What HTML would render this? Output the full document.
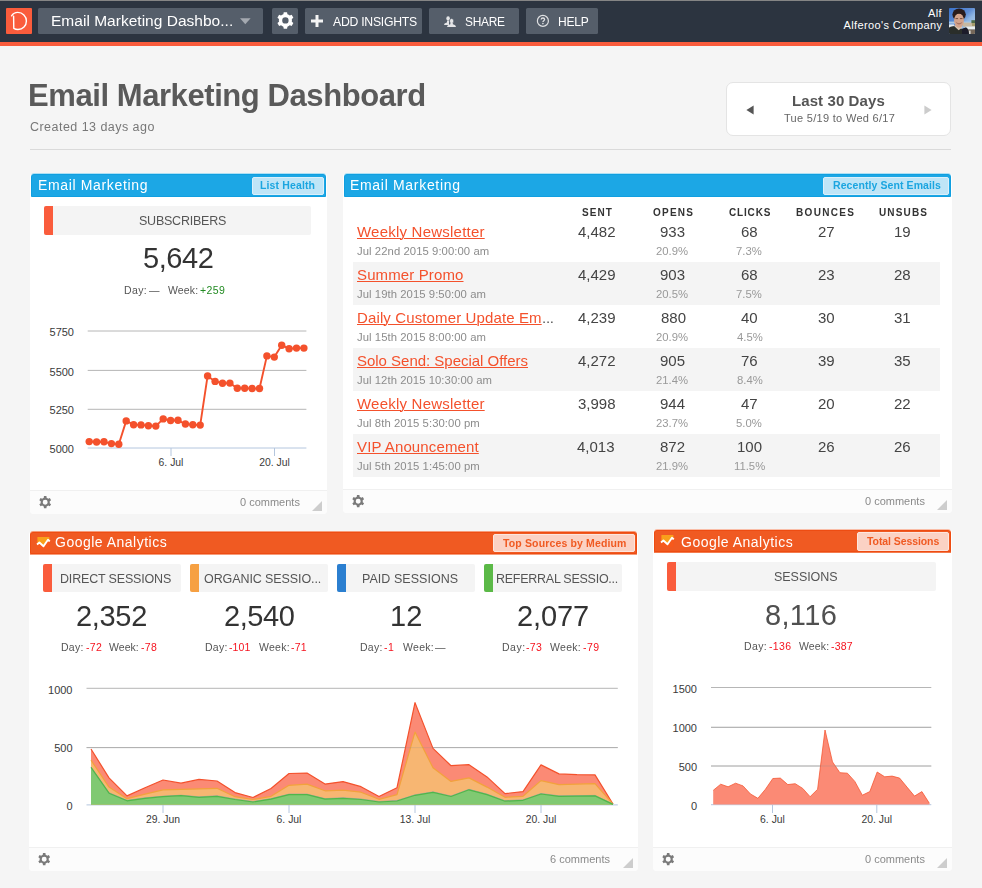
<!DOCTYPE html>
<html lang="en">
<head>
<meta charset="utf-8">
<title>Email Marketing Dashboard</title>
<style>
*{box-sizing:border-box;margin:0;padding:0}
html,body{width:982px;height:888px;overflow:hidden}
body{background:#f5f5f5;font-family:"Liberation Sans",sans-serif;color:#444;position:relative}
.t{position:absolute;white-space:pre;display:block;will-change:transform}
.t.nog{will-change:auto}
.lk{text-decoration:underline;text-decoration-thickness:1px;text-underline-offset:1px}
svg{position:absolute;display:block;overflow:visible}
svg text{font-family:"Liberation Sans",sans-serif}
#top{position:absolute;left:0;top:0;width:982px;height:46px;background:#2c3440;border-top:1px solid #858585;border-bottom:4px solid #fa5c3c}
#top .in{position:absolute;left:0;top:-1px;width:982px;height:46px}
.tb{position:absolute;top:8px;height:26px;background:#555e6a;border-radius:1.5px}
#logo{left:6px;top:8px}
#avatar{left:949px;top:8px}
#hr{position:absolute;left:30px;top:149px;width:921px;height:1px;background:#dadada}
#range{position:absolute;left:726px;top:82px;width:225px;height:54px;background:#fff;border:1px solid #e4e4e4;border-radius:7px}
.w{position:absolute;background:#fff;border-radius:4px}
.wh{position:absolute;left:1px;right:1px;border-radius:3px 3px 0 0;border:1px solid}
.blue .wh{background:#1ca7e5;border-color:#109fe0}
.orange .wh{background:#f05a22;border-color:#ee4c12}
.badge{position:absolute;border-radius:2px;border:1px solid}
.blue .badge{background:#bfe5f7;border-color:#dbf0fb}
.orange .badge{background:#fbd2c4;border-color:#fde6de}
.wf{position:absolute;left:0;right:0;bottom:0;height:24px;background:#fcfcfc;border-top:1px solid #f0f0f0;border-radius:0 0 4px 4px}
.wf .tri{position:absolute;right:5px;bottom:3.5px;width:0;height:0;border-style:solid;border-width:0 0 10px 10px;border-color:transparent transparent #cdcdcd transparent}
.ml{position:absolute;background:#f4f4f4;border-radius:2px}
.ml i{position:absolute;left:0;top:0;bottom:0;width:9px;border-radius:2px 0 0 2px}
.row{position:absolute;background:#f4f4f4}
</style>
</head>
<body>
<div id="top"><div class="in"><svg id="logo" width="26" height="26" viewBox="6 8 26 26"><rect x="6" y="8" width="26" height="26" rx="1" fill="#fa5c3c"/><path d="M11.6 15.8C13 13.6 15.4 12.4 17.8 12.4C22.6 12.4 26.4 16.2 26.4 21C26.4 25.8 22.8 29.5 18 29.5C16.4 29.5 14.9 29.1 13.8 28.4L13.6 16.2" fill="none" stroke="#fff" stroke-width="1.4" stroke-linecap="round" stroke-linejoin="round"/></svg><div class="tb" style="left:38px;width:225px"></div><div class="tb" style="left:272px;width:26px"></div><div class="tb" style="left:305px;width:117px"></div><div class="tb" style="left:429px;width:90px"></div><div class="tb" style="left:526px;width:72px"></div><svg class="ic" style="left:239.5px;top:18px" width="11" height="7" viewBox="0 0 11 7"><path d="M0 .3H10.6L5.3 6.3Z" fill="#a4a9b0"/></svg><svg class="ic" style="left:276.8px;top:12.0px" width="16.8" height="16.8" viewBox="0 0 16.8 16.8"><path fill="#fff" fill-rule="evenodd" d="M6.38 2.17L6.73 0.17L10.07 0.17L10.42 2.17A6.55 6.55 0 0 1 12.78 3.53L14.69 2.83L16.37 5.73L14.81 7.04A6.55 6.55 0 0 1 14.81 9.76L16.37 11.07L14.69 13.97L12.78 13.27A6.55 6.55 0 0 1 10.42 14.63L10.07 16.63L6.73 16.63L6.38 14.63A6.55 6.55 0 0 1 4.02 13.27L2.11 13.97L0.43 11.07L1.99 9.76A6.55 6.55 0 0 1 1.99 7.04L0.43 5.73L2.11 2.83L4.02 3.53A6.55 6.55 0 0 1 6.38 2.17ZM11.59 8.40A3.19 3.19 0 1 0 5.21 8.40A3.19 3.19 0 1 0 11.59 8.40Z"/></svg><svg class="ic" style="left:311px;top:15px" width="12" height="12" viewBox="0 0 12 12"><path d="M4.5 0h3v4.5H12v3H7.5V12h-3V7.5H0v-3h4.5z" fill="#f4f4f4"/></svg><svg class="ic" style="left:444px;top:16px" width="12" height="11" viewBox="444 16 12 11"><g fill="#e4e5e7"><ellipse cx="448.1" cy="18.4" rx="1.8" ry="2.1"/><path d="M444.1 25C444.2 23.6 445.3 23.1 446.9 22.6L447.2 20.6H449V25Z"/><ellipse cx="451.6" cy="21" rx="2.1" ry="2.5" stroke="#555e6a" stroke-width=".5"/><path d="M447.1 26.9C447.1 25.4 448.4 24.9 450.3 24.3L450.5 23H452.7L452.9 24.3C454.8 24.9 455.9 25.4 455.9 26.9Z"/></g></svg><svg class="ic" style="left:536px;top:14px" width="14" height="14" viewBox="536 14 14 14"><circle cx="542.9" cy="20.9" r="5.5" fill="none" stroke="#e0e1e3" stroke-width="1.2"/><path d="M541.2 19.6C541.2 18.6 541.9 18 542.9 18S544.6 18.6 544.6 19.5C544.6 20.6 542.9 20.8 542.9 22" fill="none" stroke="#e0e1e3" stroke-width="1.3"/><circle cx="542.9" cy="23.6" r=".8" fill="#e0e1e3"/></svg><svg id="avatar" width="26" height="26" viewBox="0 0 26 26"><defs><linearGradient id="sky" x1="0" y1="0" x2="0.9" y2="1"><stop offset="0" stop-color="#3a72cb"/><stop offset=".45" stop-color="#5f8dd3"/><stop offset=".62" stop-color="#8fb6e2"/><stop offset="1" stop-color="#b9d3ea"/></linearGradient><filter id="bl" x="-20%" y="-20%" width="140%" height="140%"><feGaussianBlur stdDeviation="0.7"/></filter><clipPath id="avc"><rect width="26" height="26" rx="1"/></clipPath></defs><g clip-path="url(#avc)"><rect width="26" height="26" fill="url(#sky)"/><g filter="url(#bl)"><rect x="-3" y="13.6" width="32" height="2" fill="#a9c8e4"/><rect x="14" y="14.6" width="15" height="4.2" fill="#c7b9a2"/><rect x="22.4" y="12.2" width="6" height="3" fill="#4d6a49"/><rect x="23" y="15" width="5" height="3" fill="#a59c6c"/><rect x="16.5" y="18.6" width="12" height="3" fill="#e9eff1"/><rect x="-3" y="16.4" width="8" height="3.6" fill="#e4eaee"/><rect x="19" y="21.4" width="9" height="7" fill="#75685a"/><rect x="19.6" y="22.6" width="2" height="5" fill="#d8d8d4"/><path d="M-2 28V21C0 19 3 18 6 18L13 21L17 19.4C19 20.5 19.8 23 20 28Z" fill="#2b2d29"/><path d="M13 21L17 19.4C19 20.5 19.8 23 20 28H13Z" fill="#1c1e29"/><path d="M4.6 17.6L9.6 22.2L13.4 19.6L12 17Z" fill="#d9c6b4"/><ellipse cx="10.1" cy="6.6" rx="6.7" ry="6.2" fill="#2a1d1b"/><ellipse cx="10" cy="12.6" rx="4.9" ry="7.2" fill="#d3a38b"/><path d="M4.9 9C5.6 6.4 7.6 5.4 10 5.4C12.6 5.4 14.6 6.4 15.2 9.4C15.6 6 14.2 2.6 10 2.6C6 2.6 4.4 6 4.9 9Z" fill="#2a1d1b"/><rect x="6.5" y="10" width="2.6" height="1.1" fill="#7d5444"/><rect x="10.9" y="10" width="2.6" height="1.1" fill="#7d5444"/><path d="M6.6 13.4C7.4 15.6 8.6 16.4 10 16.4C11.4 16.4 12.8 15.6 13.6 13.4C12.6 14.6 11.4 15 10 15C8.6 15 7.6 14.6 6.6 13.4Z" fill="#a87463"/></g></g></svg><span class="t g" style="left:50.50px;top:11px;font-size:15.5px;line-height:19px;letter-spacing:0.018px;color:#fff">Email Marketing Dashbo...</span><span class="t nog" style="left:332.65px;top:15px;font-size:12.5px;line-height:15px;letter-spacing:-0.275px;color:#fff;transform:scaleX(0.9794);transform-origin:0 50%">ADD INSIGHTS</span><span class="t nog" style="left:464.78px;top:15px;font-size:12.5px;line-height:15px;letter-spacing:-0.275px;color:#fff;transform:scaleX(0.9531);transform-origin:0 50%">SHARE</span><span class="t nog" style="left:557.97px;top:15px;font-size:12.5px;line-height:15px;letter-spacing:-0.275px;color:#fff;transform:scaleX(0.9636);transform-origin:0 50%">HELP</span><span class="t nog" style="left:928.11px;top:6px;font-size:11px;line-height:14px;letter-spacing:0.350px;color:#fff">Alf</span><span class="t nog" style="left:843.59px;top:18px;font-size:11px;line-height:14px;letter-spacing:0.359px;color:#fff">Alferoo's Company</span></div></div>
<div id="range"></div><div id="hr"></div><svg class="ic" style="left:746px;top:105px" width="8" height="10" viewBox="0 0 8 10"><path d="M7.6 0.6V9.4L0.4 5Z" fill="#555"/></svg><svg class="ic" style="left:924px;top:104.5px" width="8" height="10" viewBox="0 0 8 10"><path d="M0.4 0.6V9.4L7.6 5Z" fill="#ccc"/></svg><span class="t" style="left:28.00px;top:77px;font-size:31px;line-height:38px;letter-spacing:-0.425px;color:#5a5a5a;font-weight:bold">Email Marketing Dashboard</span><span class="t" style="left:29.79px;top:120px;font-size:12.5px;line-height:15px;letter-spacing:0.463px;color:#777">Created 13 days ago</span><span class="t" style="left:792.10px;top:92px;font-size:15px;line-height:18px;letter-spacing:0.091px;color:#555;font-weight:bold">Last 30 Days</span><span class="t" style="left:783.62px;top:111px;font-size:11px;line-height:14px;letter-spacing:0.300px;color:#666">Tue 5/19 to Wed 6/17</span>
<div class="w blue" id="w1" style="left:30px;top:173px;width:297px;height:341px"><div class="wh" style="top:1px;height:23px;box-shadow:0 -1px 0 rgba(27,165,224,0.35),0 1px 0 rgba(27,165,224,0)"></div><div class="badge" style="left:222px;top:4px;width:72px;height:18px"></div><div class="ml" style="left:14px;top:33px;width:267px;height:29px"><i style="background:#fa5c3c"></i></div><svg class="chart" style="left:0;top:0" width="297" height="341" viewBox="30 173 297 341"><path d="M87.7 331H306.4" stroke="#b6b6b6" stroke-width="1" fill="none"/><path d="M87.7 370.4H306.4" stroke="#b6b6b6" stroke-width="1" fill="none"/><path d="M87.7 409.3H306.4" stroke="#b6b6b6" stroke-width="1" fill="none"/><path d="M87.7 448H306.4" stroke="#b4c6de" stroke-width="1" fill="none"/><path d="M171 448V456" stroke="#b4c6de" stroke-width="1" fill="none"/><path d="M274.5 448V456" stroke="#b4c6de" stroke-width="1" fill="none"/><path d="M89.2 441.6 L96.6 442.0 L104.0 441.8 L111.4 443.6 L118.8 444.3 L126.2 420.9 L133.6 424.7 L141.0 424.9 L148.4 425.8 L155.8 426.1 L163.2 418.9 L170.6 420.5 L178.0 420.3 L185.4 424.0 L192.8 424.7 L200.2 425.1 L207.6 375.9 L215.1 381.4 L222.5 383.2 L229.9 383.1 L237.3 388.3 L244.7 388.3 L252.1 388.5 L259.5 388.5 L266.9 355.9 L274.3 357.1 L281.7 345.2 L289.1 348.8 L296.5 348.1 L303.9 348.1" stroke="#f4512c" stroke-width="1.9" fill="none" stroke-linejoin="round"/><g fill="#f4512c"><circle cx="89.2" cy="441.6" r="3.7"/><circle cx="96.6" cy="442.0" r="3.7"/><circle cx="104.0" cy="441.8" r="3.7"/><circle cx="111.4" cy="443.6" r="3.7"/><circle cx="118.8" cy="444.3" r="3.7"/><circle cx="126.2" cy="420.9" r="3.7"/><circle cx="133.6" cy="424.7" r="3.7"/><circle cx="141.0" cy="424.9" r="3.7"/><circle cx="148.4" cy="425.8" r="3.7"/><circle cx="155.8" cy="426.1" r="3.7"/><circle cx="163.2" cy="418.9" r="3.7"/><circle cx="170.6" cy="420.5" r="3.7"/><circle cx="178.0" cy="420.3" r="3.7"/><circle cx="185.4" cy="424.0" r="3.7"/><circle cx="192.8" cy="424.7" r="3.7"/><circle cx="200.2" cy="425.1" r="3.7"/><circle cx="207.6" cy="375.9" r="3.7"/><circle cx="215.1" cy="381.4" r="3.7"/><circle cx="222.5" cy="383.2" r="3.7"/><circle cx="229.9" cy="383.1" r="3.7"/><circle cx="237.3" cy="388.3" r="3.7"/><circle cx="244.7" cy="388.3" r="3.7"/><circle cx="252.1" cy="388.5" r="3.7"/><circle cx="259.5" cy="388.5" r="3.7"/><circle cx="266.9" cy="355.9" r="3.7"/><circle cx="274.3" cy="357.1" r="3.7"/><circle cx="281.7" cy="345.2" r="3.7"/><circle cx="289.1" cy="348.8" r="3.7"/><circle cx="296.5" cy="348.1" r="3.7"/><circle cx="303.9" cy="348.1" r="3.7"/></g><g font-size="11" fill="#3a3a3a"><text x="74.0" y="336.1" text-anchor="end">5750</text><text x="74.0" y="375.6" text-anchor="end">5500</text><text x="74.0" y="414.1" text-anchor="end">5250</text><text x="74.0" y="453.1" text-anchor="end">5000</text><g font-size="10.4"><text x="171.0" y="465.6" text-anchor="middle">6. Jul</text><text x="274.5" y="465.6" text-anchor="middle">20. Jul</text></g></g></svg><div class="wf"><svg class="gear" style="left:8.9px;top:5.2px" width="12.4" height="12.4" viewBox="0 0 12.4 12.4"><path fill="#7a7a7a" fill-rule="evenodd" d="M4.78 1.84L4.96 0.12L7.44 0.12L7.62 1.84A4.59 4.59 0 0 1 9.27 2.79L10.84 2.09L12.08 4.23L10.69 5.25A4.59 4.59 0 0 1 10.69 7.15L12.08 8.17L10.84 10.31L9.27 9.61A4.59 4.59 0 0 1 7.62 10.56L7.44 12.28L4.96 12.28L4.78 10.56A4.59 4.59 0 0 1 3.13 9.61L1.56 10.31L0.32 8.17L1.71 7.15A4.59 4.59 0 0 1 1.71 5.25L0.32 4.23L1.56 2.09L3.13 2.79A4.59 4.59 0 0 1 4.78 1.84ZM8.68 6.20A2.48 2.48 0 1 0 3.72 6.20A2.48 2.48 0 1 0 8.68 6.20Z"/></svg><span class="tri"></span></div><span class="t" style="left:7.79px;top:4px;font-size:14px;line-height:17px;letter-spacing:0.649px;color:#fff">Email Marketing</span><span class="t" style="left:230.13px;top:6px;font-size:10.5px;line-height:13px;letter-spacing:0.134px;color:#1ba5e0;font-weight:bold">List Health</span><span class="t" style="left:108.64px;top:41px;font-size:12.5px;line-height:15px;letter-spacing:-0.229px;color:#555">SUBSCRIBERS</span><span class="t" style="left:112.61px;top:68px;font-size:29px;line-height:35px;letter-spacing:-0.451px;color:#333">5,642</span><span class="t" style="left:94.47px;top:111px;font-size:10.5px;line-height:13px;letter-spacing:0.368px;color:#555">Day:</span><span class="t" style="left:119.11px;top:111px;font-size:10.5px;line-height:13px;color:#555">—</span><span class="t" style="left:138.29px;top:111px;font-size:10.5px;line-height:13px;letter-spacing:0.129px;color:#555">Week:</span><span class="t" style="left:170.39px;top:111px;font-size:10.5px;line-height:13px;letter-spacing:0.389px;color:#228b22">+259</span><span class="t" style="left:209.71px;top:322px;font-size:11px;line-height:14px;color:#8a8a8a">0 comments</span></div>
<div class="w blue" id="w2" style="left:343px;top:173px;width:609px;height:340px"><div class="wh" style="top:1px;height:23px;box-shadow:0 -1px 0 rgba(27,165,224,0.35),0 1px 0 rgba(27,165,224,0)"></div><div class="badge" style="left:480px;top:4px;width:126px;height:18px"></div><div class="row" style="left:10px;top:89px;width:587px;height:43px"></div><div class="row" style="left:10px;top:175px;width:587px;height:43px"></div><div class="row" style="left:10px;top:261px;width:587px;height:43px"></div><div class="wf"><svg class="gear" style="left:8.9px;top:5.2px" width="12.4" height="12.4" viewBox="0 0 12.4 12.4"><path fill="#7a7a7a" fill-rule="evenodd" d="M4.78 1.84L4.96 0.12L7.44 0.12L7.62 1.84A4.59 4.59 0 0 1 9.27 2.79L10.84 2.09L12.08 4.23L10.69 5.25A4.59 4.59 0 0 1 10.69 7.15L12.08 8.17L10.84 10.31L9.27 9.61A4.59 4.59 0 0 1 7.62 10.56L7.44 12.28L4.96 12.28L4.78 10.56A4.59 4.59 0 0 1 3.13 9.61L1.56 10.31L0.32 8.17L1.71 7.15A4.59 4.59 0 0 1 1.71 5.25L0.32 4.23L1.56 2.09L3.13 2.79A4.59 4.59 0 0 1 4.78 1.84ZM8.68 6.20A2.48 2.48 0 1 0 3.72 6.20A2.48 2.48 0 1 0 8.68 6.20Z"/></svg><span class="tri"></span></div><span class="t" style="left:7.11px;top:4px;font-size:14px;line-height:17px;letter-spacing:0.687px;color:#fff">Email Marketing</span><span class="t" style="left:489.57px;top:6px;font-size:10.5px;line-height:13px;letter-spacing:0.088px;color:#1ba5e0;font-weight:bold">Recently Sent Emails</span><span class="t" style="left:521.81px;top:321px;font-size:11px;line-height:14px;color:#8a8a8a">0 comments</span><span class="t" style="left:238.69px;top:34px;font-size:10px;line-height:12px;letter-spacing:1.044px;color:#333;font-weight:bold">SENT</span><span class="t" style="left:309.85px;top:34px;font-size:10px;line-height:12px;letter-spacing:1.237px;color:#333;font-weight:bold">OPENS</span><span class="t" style="left:385.97px;top:34px;font-size:10px;line-height:12px;letter-spacing:0.830px;color:#333;font-weight:bold">CLICKS</span><span class="t" style="left:453.42px;top:34px;font-size:10px;line-height:12px;letter-spacing:1.340px;color:#333;font-weight:bold">BOUNCES</span><span class="t" style="left:535.77px;top:34px;font-size:10px;line-height:12px;letter-spacing:1.153px;color:#333;font-weight:bold">UNSUBS</span><a class="t lk" style="left:14.20px;top:50px;font-size:15px;line-height:18px;letter-spacing:0.221px;color:#f4512c">Weekly Newsletter</a><span class="t" style="left:14.06px;top:71px;font-size:11.3px;line-height:14px;letter-spacing:0.066px;color:#8c8c8c">Jul 22nd 2015 9:00:00 am</span><span class="t" style="left:234.90px;top:50px;font-size:15px;line-height:18px;color:#444">4,482</span><span class="t" style="left:316.88px;top:50px;font-size:15px;line-height:18px;color:#444">933</span><span class="t" style="left:397.82px;top:50px;font-size:15px;line-height:18px;color:#444">68</span><span class="t" style="left:474.59px;top:50px;font-size:15px;line-height:18px;color:#444">27</span><span class="t" style="left:550.84px;top:50px;font-size:15px;line-height:18px;color:#444">19</span><span class="t" style="left:313.47px;top:71px;font-size:11.3px;line-height:14px;color:#999">20.9%</span><span class="t" style="left:393.16px;top:71px;font-size:11.3px;line-height:14px;color:#999">7.3%</span><a class="t lk" style="left:14.20px;top:93px;font-size:15px;line-height:18px;letter-spacing:0.122px;color:#f4512c">Summer Promo</a><span class="t" style="left:14.06px;top:114px;font-size:11.3px;line-height:14px;letter-spacing:0.061px;color:#8c8c8c">Jul 19th 2015 9:50:00 am</span><span class="t" style="left:234.90px;top:93px;font-size:15px;line-height:18px;color:#444">4,429</span><span class="t" style="left:316.88px;top:93px;font-size:15px;line-height:18px;color:#444">903</span><span class="t" style="left:397.82px;top:93px;font-size:15px;line-height:18px;color:#444">68</span><span class="t" style="left:474.59px;top:93px;font-size:15px;line-height:18px;color:#444">23</span><span class="t" style="left:551.49px;top:93px;font-size:15px;line-height:18px;color:#444">28</span><span class="t" style="left:313.47px;top:114px;font-size:11.3px;line-height:14px;color:#999">20.5%</span><span class="t" style="left:393.16px;top:114px;font-size:11.3px;line-height:14px;color:#999">7.5%</span><a class="t lk" style="left:14.20px;top:136px;font-size:15px;line-height:18px;letter-spacing:0.124px;color:#f4512c">Daily Customer Update Em</a><span class="t" style="left:198.77px;top:136px;font-size:15px;line-height:18px;letter-spacing:-0.248px;color:#555">...</span><span class="t" style="left:14.06px;top:157px;font-size:11.3px;line-height:14px;letter-spacing:0.061px;color:#8c8c8c">Jul 15th 2015 8:00:00 am</span><span class="t" style="left:234.90px;top:136px;font-size:15px;line-height:18px;color:#444">4,239</span><span class="t" style="left:317.60px;top:136px;font-size:15px;line-height:18px;color:#444">880</span><span class="t" style="left:398.38px;top:136px;font-size:15px;line-height:18px;color:#444">40</span><span class="t" style="left:474.55px;top:136px;font-size:15px;line-height:18px;color:#444">30</span><span class="t" style="left:550.65px;top:136px;font-size:15px;line-height:18px;color:#444">31</span><span class="t" style="left:313.47px;top:157px;font-size:11.3px;line-height:14px;color:#999">20.9%</span><span class="t" style="left:394.00px;top:157px;font-size:11.3px;line-height:14px;color:#999">4.5%</span><a class="t lk" style="left:14.20px;top:179px;font-size:15px;line-height:18px;letter-spacing:-0.020px;color:#f4512c">Solo Send: Special Offers</a><span class="t" style="left:14.06px;top:200px;font-size:11.3px;line-height:14px;letter-spacing:0.051px;color:#8c8c8c">Jul 12th 2015 10:30:00 am</span><span class="t" style="left:234.90px;top:179px;font-size:15px;line-height:18px;color:#444">4,272</span><span class="t" style="left:316.88px;top:179px;font-size:15px;line-height:18px;color:#444">905</span><span class="t" style="left:397.82px;top:179px;font-size:15px;line-height:18px;color:#444">76</span><span class="t" style="left:474.55px;top:179px;font-size:15px;line-height:18px;color:#444">39</span><span class="t" style="left:550.65px;top:179px;font-size:15px;line-height:18px;color:#444">35</span><span class="t" style="left:313.47px;top:200px;font-size:11.3px;line-height:14px;color:#999">21.4%</span><span class="t" style="left:393.57px;top:200px;font-size:11.3px;line-height:14px;color:#999">8.4%</span><a class="t lk" style="left:14.20px;top:222px;font-size:15px;line-height:18px;letter-spacing:0.221px;color:#f4512c">Weekly Newsletter</a><span class="t" style="left:14.06px;top:243px;font-size:11.3px;line-height:14px;letter-spacing:0.070px;color:#8c8c8c">Jul 8th 2015 5:30:00 pm</span><span class="t" style="left:234.55px;top:222px;font-size:15px;line-height:18px;color:#444">3,998</span><span class="t" style="left:316.88px;top:222px;font-size:15px;line-height:18px;color:#444">944</span><span class="t" style="left:398.38px;top:222px;font-size:15px;line-height:18px;color:#444">47</span><span class="t" style="left:474.59px;top:222px;font-size:15px;line-height:18px;color:#444">20</span><span class="t" style="left:551.49px;top:222px;font-size:15px;line-height:18px;color:#444">22</span><span class="t" style="left:313.47px;top:243px;font-size:11.3px;line-height:14px;color:#999">23.7%</span><span class="t" style="left:393.19px;top:243px;font-size:11.3px;line-height:14px;color:#999">5.0%</span><a class="t lk" style="left:14.20px;top:265px;font-size:15px;line-height:18px;letter-spacing:0.132px;color:#f4512c">VIP Anouncement</a><span class="t" style="left:14.06px;top:286px;font-size:11.3px;line-height:14px;letter-spacing:0.070px;color:#8c8c8c">Jul 5th 2015 1:45:00 pm</span><span class="t" style="left:234.48px;top:265px;font-size:15px;line-height:18px;color:#444">4,013</span><span class="t" style="left:317.22px;top:265px;font-size:15px;line-height:18px;color:#444">872</span><span class="t" style="left:393.79px;top:265px;font-size:15px;line-height:18px;color:#444">100</span><span class="t" style="left:474.59px;top:265px;font-size:15px;line-height:18px;color:#444">26</span><span class="t" style="left:551.49px;top:265px;font-size:15px;line-height:18px;color:#444">26</span><span class="t" style="left:313.47px;top:286px;font-size:11.3px;line-height:14px;color:#999">21.9%</span><span class="t" style="left:390.71px;top:286px;font-size:11.3px;line-height:14px;color:#999">11.5%</span></div>
<div class="w orange" id="w3" style="left:29px;top:531px;width:609px;height:340px"><div class="wh" style="top:1px;height:22px;box-shadow:0 -1px 0 rgba(240,90,34,0.6),0 1px 0 rgba(240,90,34,0.6)"></div><div class="badge" style="left:464px;top:3px;width:142px;height:18px"></div><svg class="ic" style="left:7.5px;top:6.0px" width="13" height="12" viewBox="0 0 13 12"><rect x="0.2" y="0" width="12.6" height="12" rx="1.2" fill="#f7591c"/><path d="M0.4 0.1H12.4V4.2L11 2.8L6.6 9.2L2.4 5.6L0.4 7.4Z" fill="#f9a01b"/><path d="M0 7.4L2.4 5.5L6.5 9.3L11 2.8L12.8 4.4" fill="none" stroke="#fff" stroke-width="1.9" stroke-linejoin="round"/></svg><div class="ml" style="left:14px;top:33px;width:138px;height:28px"><i style="background:#fa5c3c"></i></div><div class="ml" style="left:161px;top:33px;width:138px;height:28px"><i style="background:#f6a042"></i></div><div class="ml" style="left:308px;top:33px;width:138px;height:28px"><i style="background:#2b7fd0"></i></div><div class="ml" style="left:455px;top:33px;width:138px;height:28px"><i style="background:#5bb947"></i></div><svg class="chart" style="left:0;top:0" width="609" height="340" viewBox="29 531 609 340"><path d="M86.5 688.3H617.8" stroke="#b6b6b6" stroke-width="1" fill="none"/><path d="M86.5 747.6H617.8" stroke="#b6b6b6" stroke-width="1" fill="none"/><path d="M86.5 804.9H617.8" stroke="#b4c6de" stroke-width="1" fill="none"/><path d="M163 805V813" stroke="#b4c6de" stroke-width="1" fill="none"/><path d="M289 805V813" stroke="#b4c6de" stroke-width="1" fill="none"/><path d="M415 805V813" stroke="#b4c6de" stroke-width="1" fill="none"/><path d="M541 805V813" stroke="#b4c6de" stroke-width="1" fill="none"/><path d="M91 804.8 L91.0 749.0 L109.0 777.9 L127.0 795.9 L145.0 787.7 L163.0 780.0 L181.0 783.2 L199.0 779.4 L217.0 781.0 L235.0 792.6 L253.0 797.5 L271.0 788.5 L289.0 773.5 L307.0 773.1 L325.0 784.1 L343.0 781.6 L361.0 786.7 L379.0 796.5 L397.0 787.7 L415.0 702.6 L433.0 748.4 L451.0 765.7 L469.0 764.7 L487.0 776.9 L505.0 793.6 L523.0 791.6 L541.0 764.9 L559.0 773.9 L577.0 774.7 L595.0 774.9 L613.0 804.0 L613 804.8Z" fill="#fb8a75"/><path d="M91.0 749.0 L109.0 777.9 L127.0 795.9 L145.0 787.7 L163.0 780.0 L181.0 783.2 L199.0 779.4 L217.0 781.0 L235.0 792.6 L253.0 797.5 L271.0 788.5 L289.0 773.5 L307.0 773.1 L325.0 784.1 L343.0 781.6 L361.0 786.7 L379.0 796.5 L397.0 787.7 L415.0 702.6 L433.0 748.4 L451.0 765.7 L469.0 764.7 L487.0 776.9 L505.0 793.6 L523.0 791.6 L541.0 764.9 L559.0 773.9 L577.0 774.7 L595.0 774.9 L613.0 804.0" fill="none" stroke="#f4512c" stroke-width="1.2" stroke-linejoin="round"/><path d="M91 804.8 L91.0 760.2 L109.0 787.1 L127.0 798.7 L145.0 794.2 L163.0 789.8 L181.0 789.3 L199.0 788.9 L217.0 788.3 L235.0 796.7 L253.0 799.5 L271.0 796.3 L289.0 785.3 L307.0 784.1 L325.0 790.8 L343.0 790.2 L361.0 792.2 L379.0 799.3 L397.0 794.6 L415.0 732.1 L433.0 767.8 L451.0 781.4 L469.0 777.9 L487.0 787.1 L505.0 797.3 L523.0 796.3 L541.0 780.6 L559.0 784.7 L577.0 784.1 L595.0 783.6 L613.0 804.2 L613 804.8Z" fill="#f7b672"/><path d="M91.0 760.2 L109.0 787.1 L127.0 798.7 L145.0 794.2 L163.0 789.8 L181.0 789.3 L199.0 788.9 L217.0 788.3 L235.0 796.7 L253.0 799.5 L271.0 796.3 L289.0 785.3 L307.0 784.1 L325.0 790.8 L343.0 790.2 L361.0 792.2 L379.0 799.3 L397.0 794.6 L415.0 732.1 L433.0 767.8 L451.0 781.4 L469.0 777.9 L487.0 787.1 L505.0 797.3 L523.0 796.3 L541.0 780.6 L559.0 784.7 L577.0 784.1 L595.0 783.6 L613.0 804.2" fill="none" stroke="#f2a23c" stroke-width="1.2" stroke-linejoin="round"/><path d="M91.0 766.9 L109.0 792.7 L127.0 800.3 L145.0 797.8 L163.0 796.2 L181.0 795.2 L199.0 796.8 L217.0 795.8 L235.0 799.0 L253.0 801.5 L271.0 798.6 L289.0 794.1 L307.0 794.1 L325.0 798.6 L343.0 797.8 L361.0 799.0 L379.0 801.5 L397.0 800.5 L415.0 794.8 L433.0 791.9 L451.0 796.0 L469.0 789.3 L487.0 794.1 L505.0 800.7 L523.0 799.8 L541.0 793.5 L559.0 795.8 L577.0 795.6 L595.0 795.4 L613.0 803.9" fill="none" stroke="#4a90d0" stroke-opacity=".45" stroke-width="1"/><path d="M91 804.8 L91.0 767.4 L109.0 793.2 L127.0 800.8 L145.0 798.3 L163.0 796.7 L181.0 795.7 L199.0 797.3 L217.0 796.3 L235.0 799.5 L253.0 802.0 L271.0 799.1 L289.0 794.6 L307.0 794.6 L325.0 799.1 L343.0 798.3 L361.0 799.5 L379.0 802.0 L397.0 801.0 L415.0 795.3 L433.0 792.4 L451.0 796.5 L469.0 789.8 L487.0 794.6 L505.0 801.2 L523.0 800.3 L541.0 794.0 L559.0 796.3 L577.0 796.1 L595.0 795.9 L613.0 804.4 L613 804.8Z" fill="#80c972"/><path d="M91.0 767.4 L109.0 793.2 L127.0 800.8 L145.0 798.3 L163.0 796.7 L181.0 795.7 L199.0 797.3 L217.0 796.3 L235.0 799.5 L253.0 802.0 L271.0 799.1 L289.0 794.6 L307.0 794.6 L325.0 799.1 L343.0 798.3 L361.0 799.5 L379.0 802.0 L397.0 801.0 L415.0 795.3 L433.0 792.4 L451.0 796.5 L469.0 789.8 L487.0 794.6 L505.0 801.2 L523.0 800.3 L541.0 794.0 L559.0 796.3 L577.0 796.1 L595.0 795.9 L613.0 804.4" fill="none" stroke="#4fb74a" stroke-width="1.2" stroke-linejoin="round"/><path d="M86.5 747.6H617.8" stroke="#8a8a8a" stroke-opacity=".22" stroke-width="1" fill="none"/><g font-size="11" fill="#3a3a3a"><text x="72.5" y="693.6" text-anchor="end">1000</text><text x="72.5" y="752.1" text-anchor="end">500</text><text x="72.5" y="810.1" text-anchor="end">0</text><g font-size="10.4"><text x="163.0" y="822.6" text-anchor="middle">29. Jun</text><text x="289.0" y="822.6" text-anchor="middle">6. Jul</text><text x="415.0" y="822.6" text-anchor="middle">13. Jul</text><text x="541.0" y="822.6" text-anchor="middle">20. Jul</text></g></g></svg><div class="wf"><svg class="gear" style="left:8.9px;top:5.2px" width="12.4" height="12.4" viewBox="0 0 12.4 12.4"><path fill="#7a7a7a" fill-rule="evenodd" d="M4.78 1.84L4.96 0.12L7.44 0.12L7.62 1.84A4.59 4.59 0 0 1 9.27 2.79L10.84 2.09L12.08 4.23L10.69 5.25A4.59 4.59 0 0 1 10.69 7.15L12.08 8.17L10.84 10.31L9.27 9.61A4.59 4.59 0 0 1 7.62 10.56L7.44 12.28L4.96 12.28L4.78 10.56A4.59 4.59 0 0 1 3.13 9.61L1.56 10.31L0.32 8.17L1.71 7.15A4.59 4.59 0 0 1 1.71 5.25L0.32 4.23L1.56 2.09L3.13 2.79A4.59 4.59 0 0 1 4.78 1.84ZM8.68 6.20A2.48 2.48 0 1 0 3.72 6.20A2.48 2.48 0 1 0 8.68 6.20Z"/></svg><span class="tri"></span></div><span class="t" style="left:26.02px;top:3px;font-size:14px;line-height:17px;letter-spacing:0.490px;color:#fff">Google Analytics</span><span class="t" style="left:473.66px;top:6px;font-size:10.5px;line-height:13px;letter-spacing:0.142px;color:#f05a22;font-weight:bold">Top Sources by Medium</span><span class="t" style="left:521.42px;top:321px;font-size:11px;line-height:14px;letter-spacing:0.007px;color:#8a8a8a">6 comments</span><span class="t" style="left:31.22px;top:41px;font-size:12.5px;line-height:15px;letter-spacing:-0.169px;color:#555">DIRECT SESSIONS</span><span class="t" style="left:47.01px;top:68px;font-size:29px;line-height:35px;letter-spacing:-0.316px;color:#333">2,352</span><span class="t" style="left:31.57px;top:110px;font-size:10.5px;line-height:13px;letter-spacing:0.244px;color:#555">Day:</span><span class="t" style="left:56.55px;top:110px;font-size:10.5px;line-height:13px;letter-spacing:0.271px;color:#f5141f">-72</span><span class="t" style="left:80.41px;top:110px;font-size:10.5px;line-height:13px;letter-spacing:0.054px;color:#555">Week:</span><span class="t" style="left:112.33px;top:110px;font-size:10.5px;line-height:13px;letter-spacing:0.349px;color:#f5141f">-78</span><span class="t" style="left:174.99px;top:41px;font-size:12.5px;line-height:15px;letter-spacing:-0.092px;color:#555">ORGANIC SESSIO...</span><span class="t" style="left:194.57px;top:68px;font-size:29px;line-height:35px;letter-spacing:-0.427px;color:#333">2,540</span><span class="t" style="left:176.03px;top:110px;font-size:10.5px;line-height:13px;letter-spacing:0.267px;color:#555">Day:</span><span class="t" style="left:199.99px;top:110px;font-size:10.5px;line-height:13px;letter-spacing:0.089px;color:#f5141f">-101</span><span class="t" style="left:229.85px;top:110px;font-size:10.5px;line-height:13px;letter-spacing:0.245px;color:#555">Week:</span><span class="t" style="left:261.65px;top:110px;font-size:10.5px;line-height:13px;letter-spacing:0.237px;color:#f5141f">-71</span><span class="t" style="left:332.88px;top:41px;font-size:12.5px;line-height:15px;letter-spacing:0.041px;color:#555">PAID SESSIONS</span><span class="t" style="left:360.88px;top:68px;font-size:29px;line-height:35px;letter-spacing:0.027px;color:#333">12</span><span class="t" style="left:331.25px;top:110px;font-size:10.5px;line-height:13px;letter-spacing:0.267px;color:#555">Day:</span><span class="t" style="left:354.87px;top:110px;font-size:10.5px;line-height:13px;letter-spacing:0.506px;color:#f5141f">-1</span><span class="t" style="left:373.51px;top:110px;font-size:10.5px;line-height:13px;letter-spacing:0.287px;color:#555">Week:</span><span class="t" style="left:406.23px;top:110px;font-size:10.5px;line-height:13px;color:#555">—</span><span class="t" style="left:466.88px;top:41px;font-size:12.5px;line-height:15px;letter-spacing:-0.259px;color:#555">REFERRAL SESSIO...</span><span class="t" style="left:487.55px;top:68px;font-size:29px;line-height:35px;letter-spacing:-0.138px;color:#333">2,077</span><span class="t" style="left:473.03px;top:110px;font-size:10.5px;line-height:13px;letter-spacing:0.527px;color:#555">Day:</span><span class="t" style="left:497.43px;top:110px;font-size:10.5px;line-height:13px;letter-spacing:0.366px;color:#f5141f">-73</span><span class="t" style="left:520.95px;top:110px;font-size:10.5px;line-height:13px;letter-spacing:0.287px;color:#555">Week:</span><span class="t" style="left:553.55px;top:110px;font-size:10.5px;line-height:13px;letter-spacing:0.406px;color:#f5141f">-79</span></div>
<div class="w orange" id="w4" style="left:653px;top:529px;width:299px;height:342px"><div class="wh" style="top:1px;height:22px;box-shadow:0 -1px 0 rgba(240,90,34,0.4),0 1px 0 rgba(240,90,34,0.8)"></div><div class="badge" style="left:204px;top:3px;width:92px;height:19px"></div><svg class="ic" style="left:7.8px;top:6.0px" width="13" height="12" viewBox="0 0 13 12"><rect x="0.2" y="0" width="12.6" height="12" rx="1.2" fill="#f7591c"/><path d="M0.4 0.1H12.4V4.2L11 2.8L6.6 9.2L2.4 5.6L0.4 7.4Z" fill="#f9a01b"/><path d="M0 7.4L2.4 5.5L6.5 9.3L11 2.8L12.8 4.4" fill="none" stroke="#fff" stroke-width="1.9" stroke-linejoin="round"/></svg><div class="ml" style="left:14px;top:33px;width:269px;height:29px"><i style="background:#fa5c3c"></i></div><svg class="chart" style="left:0;top:0" width="299" height="342" viewBox="653 529 299 342"><path d="M711 687.5H931.3" stroke="#b6b6b6" stroke-width="1" fill="none"/><path d="M711 727.3H931.3" stroke="#b6b6b6" stroke-width="1" fill="none"/><path d="M711 766H931.3" stroke="#b6b6b6" stroke-width="1" fill="none"/><path d="M711 804.7H931.3" stroke="#b4c6de" stroke-width="1" fill="none"/><path d="M772.5 805V813" stroke="#b4c6de" stroke-width="1" fill="none"/><path d="M876.8 805V813" stroke="#b4c6de" stroke-width="1" fill="none"/><path d="M713.2 804.6 L713.2 790.4 L720.7 784.2 L728.1 786.8 L735.6 783.2 L743.0 785.9 L750.5 794.0 L757.9 798.3 L765.4 789.3 L772.8 778.5 L780.3 778.1 L787.8 784.6 L795.2 783.7 L802.7 788.4 L810.1 796.7 L817.6 789.3 L825.0 730.0 L832.5 761.9 L839.9 772.7 L847.4 773.2 L854.8 781.4 L862.3 795.2 L869.8 791.6 L877.2 772.0 L884.7 776.8 L892.1 776.1 L899.6 778.1 L907.0 787.1 L914.5 796.1 L921.9 791.6 L929.4 803.3 L929.4 804.6Z" fill="#fb8a75"/><path d="M713.2 790.4 L720.7 784.2 L728.1 786.8 L735.6 783.2 L743.0 785.9 L750.5 794.0 L757.9 798.3 L765.4 789.3 L772.8 778.5 L780.3 778.1 L787.8 784.6 L795.2 783.7 L802.7 788.4 L810.1 796.7 L817.6 789.3 L825.0 730.0 L832.5 761.9 L839.9 772.7 L847.4 773.2 L854.8 781.4 L862.3 795.2 L869.8 791.6 L877.2 772.0 L884.7 776.8 L892.1 776.1 L899.6 778.1 L907.0 787.1 L914.5 796.1 L921.9 791.6 L929.4 803.3" fill="none" stroke="#f4512c" stroke-opacity=".75" stroke-width="1" stroke-linejoin="round"/><path d="M711 727.3H931.3 M711 766H931.3" stroke="#8a8a8a" stroke-opacity=".3" stroke-width="1" fill="none"/><g font-size="11" fill="#3a3a3a"><text x="697.0" y="692.6" text-anchor="end">1500</text><text x="697.0" y="732.4" text-anchor="end">1000</text><text x="697.0" y="771.1" text-anchor="end">500</text><text x="697.0" y="809.9" text-anchor="end">0</text><g font-size="10.4"><text x="772.5" y="822.6" text-anchor="middle">6. Jul</text><text x="876.8" y="822.6" text-anchor="middle">20. Jul</text></g></g></svg><div class="wf"><svg class="gear" style="left:8.9px;top:5.2px" width="12.4" height="12.4" viewBox="0 0 12.4 12.4"><path fill="#7a7a7a" fill-rule="evenodd" d="M4.78 1.84L4.96 0.12L7.44 0.12L7.62 1.84A4.59 4.59 0 0 1 9.27 2.79L10.84 2.09L12.08 4.23L10.69 5.25A4.59 4.59 0 0 1 10.69 7.15L12.08 8.17L10.84 10.31L9.27 9.61A4.59 4.59 0 0 1 7.62 10.56L7.44 12.28L4.96 12.28L4.78 10.56A4.59 4.59 0 0 1 3.13 9.61L1.56 10.31L0.32 8.17L1.71 7.15A4.59 4.59 0 0 1 1.71 5.25L0.32 4.23L1.56 2.09L3.13 2.79A4.59 4.59 0 0 1 4.78 1.84ZM8.68 6.20A2.48 2.48 0 1 0 3.72 6.20A2.48 2.48 0 1 0 8.68 6.20Z"/></svg><span class="tri"></span></div><span class="t" style="left:28.24px;top:5px;font-size:14px;line-height:17px;letter-spacing:0.490px;color:#fff">Google Analytics</span><span class="t" style="left:214.22px;top:6px;font-size:10.5px;line-height:13px;letter-spacing:-0.085px;color:#f05a22;font-weight:bold">Total Sessions</span><span class="t" style="left:120.57px;top:41px;font-size:12.5px;line-height:15px;letter-spacing:-0.045px;color:#555">SESSIONS</span><span class="t" style="left:112.17px;top:69px;font-size:29px;line-height:35px;letter-spacing:0.336px;color:#505050">8,116</span><span class="t" style="left:90.79px;top:111px;font-size:10.5px;line-height:13px;letter-spacing:0.368px;color:#555">Day:</span><span class="t" style="left:116.11px;top:111px;font-size:10.5px;line-height:13px;letter-spacing:0.326px;color:#f5141f">-136</span><span class="t" style="left:145.95px;top:111px;font-size:10.5px;line-height:13px;letter-spacing:0.129px;color:#555">Week:</span><span class="t" style="left:177.65px;top:111px;font-size:10.5px;line-height:13px;letter-spacing:0.169px;color:#f5141f">-387</span><span class="t" style="left:211.81px;top:323px;font-size:11px;line-height:14px;color:#8a8a8a">0 comments</span></div>
</body>
</html>
